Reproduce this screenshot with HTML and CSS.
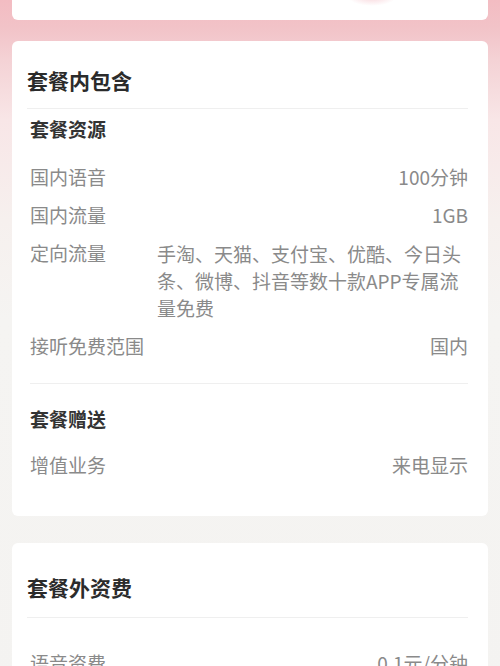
FILE: index.html
```html
<!DOCTYPE html>
<html lang="zh-CN">
<head>
    <meta charset="UTF-8">
    <meta name="viewport" content="width=device-width, initial-scale=1.0">
    <title>套餐详情</title>
    <link rel="stylesheet" href="styles.css">
</head>
<body>
    <div class="page">
        <div class="card card-top"></div>

        <div class="card">
            <h2 class="card-title">套餐内包含</h2>
            <div class="group">
                <h3 class="group-title">套餐资源</h3>
                <div class="row">
                    <span class="label">国内语音</span>
                    <span class="value">100分钟</span>
                </div>
                <div class="row">
                    <span class="label">国内流量</span>
                    <span class="value">1GB</span>
                </div>
                <div class="row row-wrap">
                    <span class="label">定向流量</span>
                    <span class="value">手淘、天猫、支付宝、优酷、今日头条、微博、抖音等数十款APP专属流量免费</span>
                </div>
                <div class="row">
                    <span class="label">接听免费范围</span>
                    <span class="value">国内</span>
                </div>
            </div>
            <div class="group">
                <h3 class="group-title">套餐赠送</h3>
                <div class="row">
                    <span class="label">增值业务</span>
                    <span class="value">来电显示</span>
                </div>
            </div>
        </div>

        <div class="card card-extra">
            <h2 class="card-title">套餐外资费</h2>
            <div class="group">
                <div class="row">
                    <span class="label">语音资费</span>
                    <span class="value">0.1元/分钟</span>
                </div>
            </div>
        </div>
    </div>
</body>
</html>
```
FILE: styles.css
```css
body {
    margin: 0;
    padding: 0;
    font-family: "Noto Sans CJK SC", "Noto Sans", sans-serif;
    background: linear-gradient(to bottom, #f3bcc2 0, #f2c3c8 28px, #f4d2d5 60px, #f8e6e7 120px, #f6f0ee 220px, #f5f4f2 320px, #f4f3f1 100%);
    min-height: 666px;
    overflow: hidden;
}
.page {
    padding: 0 12px;
}
.card {
    background: #fff;
    border-radius: 6px;
    padding: 0 20px 14px 18px;
}
.card-top {
    position: relative;
    height: 20px;
    padding: 0;
    border-radius: 0 0 6px 6px;
    margin-bottom: 21px;
    overflow: hidden;
}
.card-top::after {
    content: "";
    position: absolute;
    left: 335px;
    top: -14px;
    width: 50px;
    height: 20px;
    border-radius: 50%;
    background: radial-gradient(ellipse at center, rgba(244, 190, 198, 0.7), rgba(255, 255, 255, 0) 70%);
}
.card-title {
    margin: 0 0 0 -3px;
    padding: 25px 0 14px;
    font-size: 21px;
    line-height: 28px;
    font-weight: 700;
    color: #2b2b2b;
    border-bottom: 1px solid #efefef;
}
.group {
    padding: 7px 0 18px;
}
.group + .group {
    border-top: 1px solid #efefef;
    padding-top: 22px;
}
.group-title {
    margin: 0 0 16px;
    font-size: 19px;
    line-height: 26px;
    font-weight: 700;
    color: #333;
}
.group + .group .group-title {
    margin-bottom: 14px;
}
.row {
    display: flex;
    justify-content: space-between;
    padding: 6px 0;
    font-size: 19px;
    line-height: 26px;
    color: #8a8a8a;
}
.label {
    width: 127px;
    flex-shrink: 0;
    white-space: nowrap;
}
.value {
    flex: 1;
    text-align: right;
}
.row-wrap .value {
    text-align: left;
    line-height: 27px;
}
.card-extra {
    margin-top: 27px;
}
.card-extra .card-title {
    padding-top: 30px;
    padding-bottom: 16px;
}
.card-extra .group {
    padding-top: 26px;
}
```
